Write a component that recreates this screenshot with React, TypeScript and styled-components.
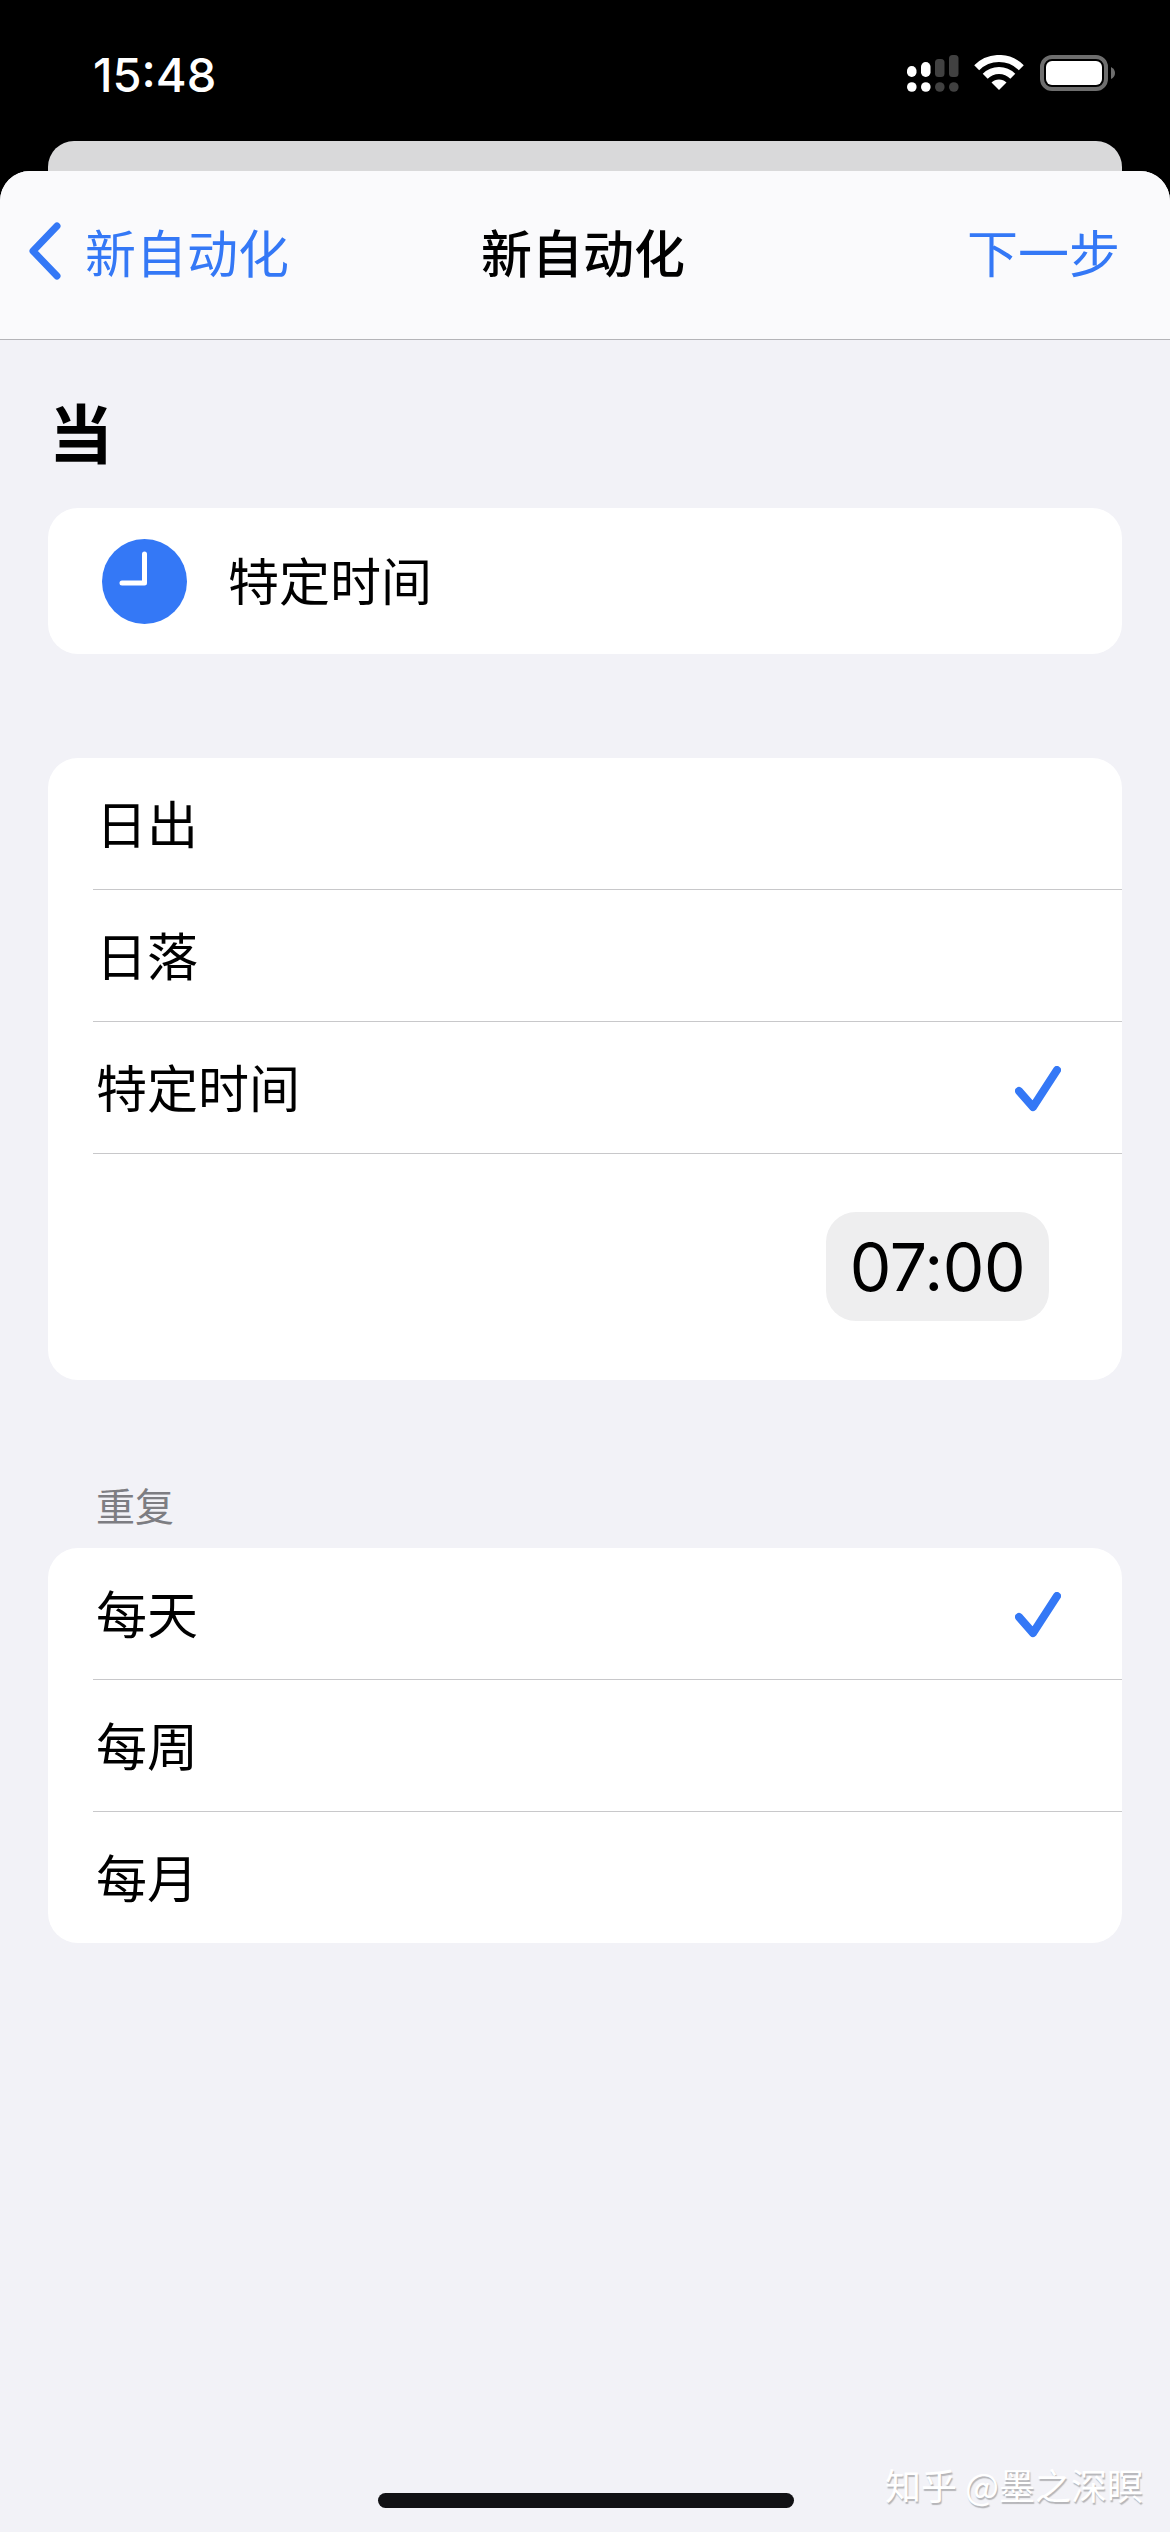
import React from 'react';
import styled, { createGlobalStyle } from 'styled-components';

const BLUE = '#3478f6';
const CJK = '"Noto Sans CJK SC", "Liberation Sans", sans-serif';

const GlobalStyle = createGlobalStyle`
  html, body {
    margin: 0;
    padding: 0;
    background: #000;
  }
  * {
    box-sizing: border-box;
  }
`;

const Screen = styled.div`
  position: relative;
  display: flex;
  flex-direction: column;
  width: 1170px;
  height: 2532px;
  overflow: hidden;
  background: #000;
  font-family: ${CJK};
  color: #000;
`;

const StatusBar = styled.div`
  display: flex;
  justify-content: space-between;
  align-items: flex-start;
  height: 141px;
  padding: 50px 55px 0 93px;
`;

const Clock = styled.span`
  font-family: Inter, "Liberation Sans", sans-serif;
  font-size: 47px;
  font-weight: 500;
  line-height: 50px;
  color: #fff;
`;

const StatusIcons = styled.svg`
  display: block;
  width: 208px;
  height: 40px;
  margin-top: 5px;
`;

const PeekCard = styled.div`
  flex: none;
  height: 30px;
  margin: 0 48px;
  border-radius: 26px 26px 0 0;
  background: #d9d9da;
`;

const Sheet = styled.div`
  flex: 1;
  display: flex;
  flex-direction: column;
  border-radius: 30px 30px 0 0;
  background: #f2f2f7;
  overflow: hidden;
`;

const NavBar = styled.div`
  display: grid;
  grid-template-columns: 1fr auto 1fr;
  align-items: center;
  height: 169px;
  padding: 0 31px 8px 27px;
  background: #fafafc;
  border-bottom: 1.5px solid #b4b4b8;
`;

const BackLink = styled.div`
  display: flex;
  align-items: center;
  gap: 23px;
  color: ${BLUE};
  font-size: 51px;
  line-height: 60px;
`;

const NavTitle = styled.div`
  font-size: 51px;
  font-weight: 500;
  line-height: 60px;
`;

const NextLink = styled.div`
  justify-self: end;
  margin-right: 19px;
  color: ${BLUE};
  font-size: 51px;
  line-height: 60px;
`;

const Content = styled.div`
  display: flex;
  flex-direction: column;
  padding: 0 48px;
`;

const Heading = styled.h1`
  margin: 50px 0 38px 1px;
  font-size: 64px;
  font-weight: 700;
  line-height: 80px;
`;

const Card = styled.div<{ $gap?: number }>`
  margin-bottom: ${({ $gap }) => $gap ?? 0}px;
  border-radius: 30px;
  background: #fff;
  overflow: hidden;
`;

const TriggerRow = styled.div`
  display: flex;
  align-items: center;
  gap: 41px;
  height: 146px;
  padding-left: 54px;
  font-size: 51px;
`;

const TriggerLabel = styled.span`
  margin-top: -5px;
`;

const ClockBadge = styled.svg`
  display: block;
  width: 85px;
  height: 85px;
`;

const Row = styled.div<{ $last?: boolean }>`
  display: flex;
  justify-content: space-between;
  align-items: center;
  height: ${({ $last }) => ($last ? '131px' : '132px')};
  margin-left: 45px;
  padding: 0 61px 3px 3px;
  border-bottom: ${({ $last }) => ($last ? 'none' : '1.5px solid #c8c8ca')};
  font-size: 51px;
  line-height: 60px;
`;

const Check = styled.svg`
  display: block;
  width: 46px;
  height: 46px;
  margin-top: 5px;
`;

const TimeRow = styled.div`
  display: flex;
  justify-content: flex-end;
  height: 226px;
  padding: 58px 73px 0 0;
`;

const TimePill = styled.div`
  display: flex;
  justify-content: center;
  align-items: center;
  width: 223px;
  height: 109px;
  border-radius: 30px;
  background: #eeeeef;
  font-family: Inter, "Liberation Sans", sans-serif;
  font-size: 66px;
  letter-spacing: -0.5px;
`;

const SectionLabel = styled.div`
  margin: 0 0 20px 48px;
  color: #7d7d82;
  font-size: 39px;
  line-height: 48px;
`;

const HomeIndicator = styled.div`
  position: absolute;
  left: 378px;
  bottom: 24px;
  width: 416px;
  height: 15px;
  border-radius: 8px;
  background: #111114;
`;

const Watermark = styled.div`
  position: absolute;
  right: 27px;
  bottom: 24px;
  color: #fff;
  font-size: 36px;
  line-height: 48px;
  text-shadow: 1px 2px 1px #b5b5b8;
  white-space: pre;
`;

const CheckMark = () => (
  <Check viewBox="0 0 46 46" fill="none">
    <path d="M4 25 L18 41 L42 4" stroke={BLUE} strokeWidth="8" strokeLinecap="round" strokeLinejoin="round" />
  </Check>
);

const App: React.FC = () => (
  <Screen>
    <GlobalStyle />
    <StatusBar>
      <Clock>15:48</Clock>
      <StatusIcons viewBox="0 0 208 40">
        {/* signal */}
        <rect x="0" y="11" width="9.5" height="11" rx="4.7" fill="#fff" />
        <rect x="14" y="7" width="9.5" height="15" rx="4.7" fill="#fff" />
        <rect x="28" y="4" width="9.5" height="18" rx="3.5" fill="#414141" />
        <rect x="42" y="0" width="9.5" height="22" rx="3.5" fill="#414141" />
        <circle cx="4.8" cy="32" r="4.8" fill="#fff" />
        <circle cx="18.8" cy="32" r="4.8" fill="#fff" />
        <circle cx="32.8" cy="32" r="4.8" fill="#414141" />
        <circle cx="46.8" cy="32" r="4.8" fill="#414141" />
        {/* wifi */}
        <path d="M69.7 12.7 A31.5 31.5 0 0 1 114.3 12.7" fill="none" stroke="#fff" strokeWidth="7" />
        <path d="M78.2 21.2 A19.5 19.5 0 0 1 105.8 21.2" fill="none" stroke="#fff" strokeWidth="7" />
        <path d="M92 35 L84.5 27.5 A10.6 10.6 0 0 1 99.5 27.5 Z" fill="#fff" />
        {/* battery */}
        <rect x="135" y="2" width="64" height="32" rx="10" fill="none" stroke="#6e6e6e" strokeWidth="4" />
        <rect x="139" y="6" width="56" height="24" rx="6" fill="#fff" />
        <path d="M204 12 Q208 14 208 18 Q208 22 204 24 Z" fill="#6e6e6e" />
      </StatusIcons>
    </StatusBar>
    <PeekCard />
    <Sheet>
      <NavBar>
        <BackLink>
          <svg width="35" height="58" viewBox="0 0 35 58" fill="none">
            <path d="M30 4 L6 29 L30 54" stroke={BLUE} strokeWidth="7" strokeLinecap="round" strokeLinejoin="round" />
          </svg>
          <span>新自动化</span>
        </BackLink>
        <NavTitle>新自动化</NavTitle>
        <NextLink>下一步</NextLink>
      </NavBar>
      <Content>
        <Heading>当</Heading>
        <Card $gap={104}>
          <TriggerRow>
            <ClockBadge viewBox="0 0 85 85">
              <circle cx="42.5" cy="42.5" r="42.5" fill={BLUE} />
              <path d="M42.5 15 V44 H20" fill="none" stroke="#fff" strokeWidth="5" strokeLinecap="round" strokeLinejoin="round" />
            </ClockBadge>
            <TriggerLabel>特定时间</TriggerLabel>
          </TriggerRow>
        </Card>
        <Card $gap={100}>
          <Row>日出</Row>
          <Row>日落</Row>
          <Row>
            特定时间
            <CheckMark />
          </Row>
          <TimeRow>
            <TimePill>07:00</TimePill>
          </TimeRow>
        </Card>
        <SectionLabel>重复</SectionLabel>
        <Card>
          <Row>
            每天
            <CheckMark />
          </Row>
          <Row>每周</Row>
          <Row $last>每月</Row>
        </Card>
      </Content>
    </Sheet>
    <HomeIndicator />
    <Watermark>知乎 @墨之深瞑</Watermark>
  </Screen>
);

export default App;
